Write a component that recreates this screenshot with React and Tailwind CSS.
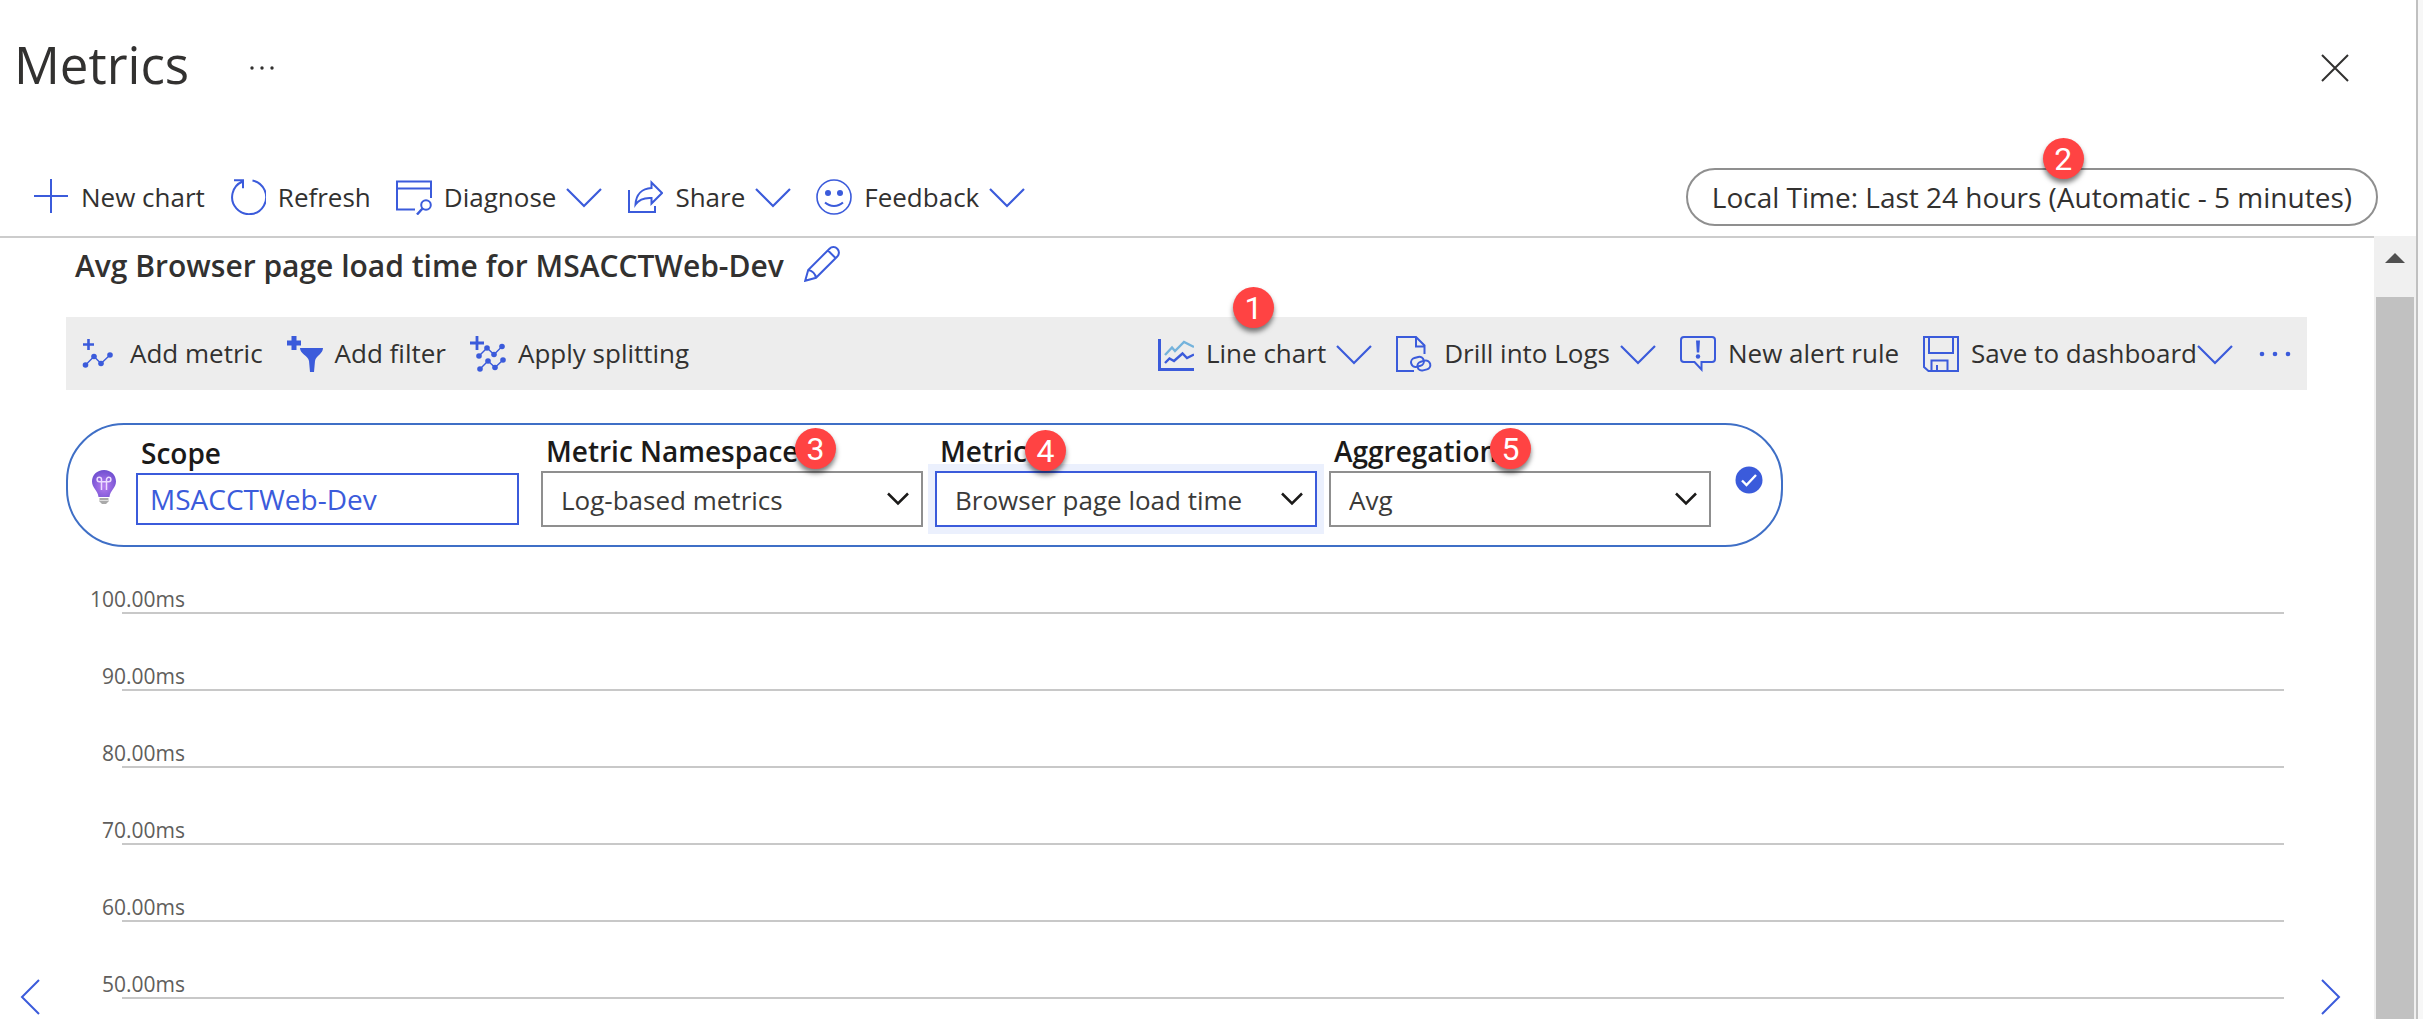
import React from "react";

const BLUE = "#3b5bdb";

function Icon({ children, size = 36, className = "" }) {
  return (
    <svg
      width={size}
      height={size}
      viewBox="0 0 36 36"
      fill="none"
      stroke={BLUE}
      strokeWidth="2"
      aria-hidden="true"
      className={"shrink-0 " + className}
    >
      {children}
    </svg>
  );
}

const Chevron = () => (
  <Icon>
    <path d="M1 10 18 27 35 10" strokeWidth="2.200" />
  </Icon>
);

const PlusIcon = () => (
  <Icon>
    <path d="M18 0v34M1 17h34" />
  </Icon>
);

const RefreshIcon = () => (
  <Icon>
    <path d="M22.500 1.500A17 17 0 1 1 12.500 2.500M4 1.200h9v8" />
  </Icon>
);

const DiagnoseIcon = () => (
  <Icon>
    <path d="M35 19V2.500H1v28h18M1 9.500h34" />
    <circle cx="30" cy="26" r="4.800" />
    <path d="M26.500 29.500 21 35.500" strokeWidth="2.500" />
  </Icon>
);

const ShareIcon = () => (
  <Icon>
    <path d="M2 11v22h26v-6" />
    <path d="M24.500 3.500 35 14 24.500 24.500V19C17 18.500 12 20.500 8.500 25.500 9 15.500 15 9.500 24.500 9Z" />
  </Icon>
);

const SmileIcon = () => (
  <Icon>
    <circle cx="18" cy="18" r="17" strokeWidth="1.600" />
    <circle cx="12" cy="14" r="3" fill={BLUE} stroke="none" />
    <circle cx="24" cy="14" r="3" fill={BLUE} stroke="none" />
    <path d="M9 23.500c5 4.500 13 4.500 18 0" />
  </Icon>
);

const PencilIcon = () => (
  <Icon>
    <path d="M1.200 34.800 4.200 24 25.500 2.700a5.400 5.400 0 0 1 7.800 7.800L12 31.800ZM4.200 24c4 .5 7.300 3.800 7.800 7.800M24 4.500l7.500 7.500" />
  </Icon>
);

const AddMetricIcon = () => (
  <Icon>
    <path d="M6.500 3v11M1 8.500h11" strokeWidth="2.600" />
    <path d="M3.500 29 12 20.500 19 27.500 28 19" strokeWidth="1.400" />
    <g fill={BLUE} stroke="none">
      <circle cx="3.500" cy="29" r="2.800" />
      <circle cx="12" cy="20.500" r="2.800" />
      <circle cx="19" cy="27.500" r="2.800" />
      <circle cx="28" cy="19" r="2.800" />
    </g>
  </Icon>
);

const AddFilterIcon = () => (
  <Icon>
    <path d="M7 0v14M0 7h14" strokeWidth="5" />
    <path
      d="M13 12h23c0 6-7 7.500-8 13l-1 11h-4l-1-11c-1-5.500-9-7-9-13Z"
      fill={BLUE}
      stroke="none"
    />
  </Icon>
);

const SplitIcon = () => (
  <Icon>
    <path d="M7 0v14M0 7h14" strokeWidth="2.800" />
    <path d="M9 20 17 12 24 18.500 32 10.500M10 33 18 25 25 31.500 33 24" strokeWidth="1.400" />
    <g fill={BLUE} stroke="none">
      <circle cx="9" cy="20" r="2.800" />
      <circle cx="17" cy="12" r="2.800" />
      <circle cx="24" cy="18.500" r="2.800" />
      <circle cx="32" cy="10.500" r="2.800" />
      <circle cx="10" cy="33" r="2.800" />
      <circle cx="18" cy="25" r="2.800" />
      <circle cx="25" cy="31.500" r="2.800" />
      <circle cx="33" cy="24" r="2.800" />
    </g>
  </Icon>
);

const LineChartIcon = () => (
  <Icon>
    <path d="M1.500 3v30.500H36" strokeWidth="3" />
    <path d="M7 19 14 11.500 17 15 26 6 36 11" stroke="#74b3dc" strokeWidth="2.400" />
    <path d="M7 27 11.500 22.500 16 25 24.500 17.500 29 22 36 18.500" strokeWidth="2.400" />
  </Icon>
);

const DrillIcon = () => (
  <Icon>
    <path d="M18 35H1V1h19l8.500 8.500V18M20 1v9.500h8.500" />
    <rect x="15" y="21.500" width="13" height="9" rx="4.500" transform="rotate(-15 21 26)" />
    <rect x="21.500" y="25" width="13" height="9" rx="4.500" transform="rotate(-15 28 30)" />
  </Icon>
);

const AlertIcon = () => (
  <Icon>
    <path d="M4 1h28q3 0 3 3v19q0 3-3 3h-10.500v7.500L14.500 26H4q-3 0-3-3V4q0-3 3-3Z" />
    <path d="M16 4.500h4l-.8 12h-2.400Z" fill={BLUE} stroke="none" />
    <circle cx="18" cy="20.500" r="2.200" fill={BLUE} stroke="none" />
  </Icon>
);

const SaveIcon = () => (
  <Icon>
    <path d="M1 1h34v34H5.500L1 31ZM6 1v16h24V1M8.500 35V24.500h16V35M14 35v-6" />
  </Icon>
);

const BulbIcon = () => (
  <svg width="24" height="34" viewBox="0 0 24 34" fill="none" aria-hidden="true" className="shrink-0">
    <defs>
      <radialGradient id="bulb" cx="50%" cy="60%" r="60%">
        <stop offset="0" stopColor="#b77cf0" />
        <stop offset="1" stopColor="#6f4fd0" />
      </radialGradient>
    </defs>
    <path
      d="M12 0C5 0 0 5 0 11.500 0 18 6 20.500 6.500 27h11C18 20.500 24 18 24 11.500 24 5 19 0 12 0Z"
      fill="url(#bulb)"
    />
    <path d="M7.500 28h9v3.500L14 34h-4l-2.500-2.500Z" fill="#a9a9a9" />
    <path d="M7.500 30.500h9" stroke="#dddddd" />
    <path
      d="M9.500 20V9.500a2.200 2.200 0 1 0-2.200 2.200h9.400a2.200 2.200 0 1 0-2.200-2.200V20"
      stroke="#ecdcff"
      strokeWidth="1.500"
    />
  </svg>
);

function ToolButton({ icon, label, chevron, tight, children }) {
  return (
    <button type="button" className="relative flex items-center gap-3 whitespace-nowrap">
      {icon}
      <span className="flex items-center">
        {label}
        {chevron && (
          <span className={tight ? "" : "ml-[10px]"}>
            <Chevron />
          </span>
        )}
      </span>
      {children}
    </button>
  );
}

function Badge({ n, className }) {
  return (
    <span
      className={
        "absolute z-10 flex size-[41px] items-center justify-center rounded-full bg-[#ff4343] font-['Roboto',sans-serif] text-[32px] leading-none font-normal text-white shadow-[0_4px_5px_rgba(0,0,0,0.5)] " +
        className
      }
    >
      {n}
    </span>
  );
}

function MetricSelect({ id, label, value, focused, badge, badgeClass }) {
  return (
    <div className="relative w-[382px]">
      <label htmlFor={id} className="block h-9 pl-[5px] text-[28px] leading-8 font-semibold text-[#1b1a19]">
        {label}
      </label>
      <div className="relative">
        <select
          id={id}
          defaultValue={value}
          className={
            "h-14 w-full appearance-none border-2 bg-white pt-[2px] pl-[18px] text-[26px] text-[#3b3a39] outline-none " +
            (focused ? "border-[#3b5bdb] ring-[7px] ring-[#ebf0fd]" : "border-[#8f8f8f]")
          }
        >
          <option>{value}</option>
        </select>
        <svg
          width="22"
          height="14"
          viewBox="0 0 22 14"
          fill="none"
          stroke="#1b1a19"
          strokeWidth="2.500"
          aria-hidden="true"
          className="pointer-events-none absolute top-[21px] right-[14px]"
        >
          <path d="M1 1.500 11 11.500 21 1.500" />
        </svg>
      </div>
      <Badge n={badge} className={badgeClass} />
    </div>
  );
}

const ticks = ["100.00ms", "90.00ms", "80.00ms", "70.00ms", "60.00ms", "50.00ms"];

export default function App() {
  return (
    <div className="flex h-screen overflow-hidden bg-white font-['Open_Sans',sans-serif] text-[26px] text-[#323130]">
      <div className="flex min-w-0 flex-1 flex-col">
        <header className="flex h-32 shrink-0 items-center pl-[14px] pr-[67px]">
          <h1 className="text-[51px] leading-none font-normal">Metrics</h1>
          <button type="button" aria-label="More options" className="mt-2 ml-[59px]">
            <svg width="28" height="6" viewBox="0 0 28 6" fill="#323130" aria-hidden="true">
              <circle cx="4" cy="3" r="1.700" />
              <circle cx="14" cy="3" r="1.700" />
              <circle cx="24" cy="3" r="1.700" />
            </svg>
          </button>
          <button type="button" aria-label="Close" className="mt-2 ml-auto">
            <svg width="28" height="28" viewBox="0 0 28 28" stroke="#323130" strokeWidth="2" aria-hidden="true">
              <path d="M1 1 27 27M27 1 1 27" />
            </svg>
          </button>
        </header>

        <div className="flex shrink-0 items-center gap-[25px] pt-10 pb-[10px] pl-[33px] pr-[38px]">
          <ToolButton icon={<PlusIcon />} label="New chart" />
          <ToolButton icon={<RefreshIcon />} label="Refresh" />
          <ToolButton icon={<DiagnoseIcon />} label="Diagnose" chevron />
          <ToolButton icon={<ShareIcon />} label="Share" chevron />
          <ToolButton icon={<SmileIcon />} label="Feedback" chevron />
          <button
            type="button"
            className="relative ml-auto h-[58px] rounded-full border-2 border-[#8f8f8f] px-6 text-[28px] whitespace-nowrap"
          >
            Local Time: Last 24 hours (Automatic - 5 minutes)
            <Badge n="2" className="-top-8 left-[355px]" />
          </button>
        </div>

        <div className="flex min-h-0 flex-1">
          <main className="min-w-0 flex-1 overflow-hidden border-t-2 border-[#cccccc]">
            <div className="pr-[67px] pl-[66px]">
              <div className="mb-6 flex h-[55px] items-center gap-5 pl-[9px]">
                <h2 className="text-[30px] font-semibold whitespace-nowrap">
                  Avg Browser page load time for MSACCTWeb-Dev
                </h2>
                <button type="button" aria-label="Rename chart" className="mb-1">
                  <PencilIcon />
                </button>
              </div>

              <div className="mb-[33px] flex h-[73px] items-center gap-6 bg-[#ededed] pr-[14px] pl-4">
                <ToolButton icon={<AddMetricIcon />} label="Add metric" />
                <ToolButton icon={<AddFilterIcon />} label="Add filter" />
                <ToolButton icon={<SplitIcon />} label="Apply splitting" />
                <div className="ml-auto flex items-center gap-6">
                  <ToolButton icon={<LineChartIcon />} label="Line chart" chevron>
                    <Badge n="1" className="-top-[47px] left-[75px]" />
                  </ToolButton>
                  <ToolButton icon={<DrillIcon />} label="Drill into Logs" chevron />
                  <ToolButton icon={<AlertIcon />} label="New alert rule" />
                  <ToolButton icon={<SaveIcon />} label="Save to dashboard" chevron tight />
                  <button type="button" aria-label="More chart options">
                    <svg width="36" height="8" viewBox="0 0 36 8" fill={BLUE} aria-hidden="true">
                      <circle cx="5" cy="4" r="2.300" />
                      <circle cx="18" cy="4" r="2.300" />
                      <circle cx="31" cy="4" r="2.300" />
                    </svg>
                  </button>
                </div>
              </div>

              <div className="flex h-[124px] w-fit items-start rounded-[58px] border-2 border-[#3f6fc6] pt-[10px] pr-[18px] pl-6">
                <div className="mt-[35px] mr-5">
                  <BulbIcon />
                </div>
                <div className="mr-[22px] w-[383px]">
                  <label
                    htmlFor="scope"
                    className="block h-[38px] pl-[5px] text-[28px] leading-9 font-semibold text-[#1b1a19]"
                  >
                    Scope
                  </label>
                  <input
                    id="scope"
                    defaultValue="MSACCTWeb-Dev"
                    className="h-[52px] w-full border-2 border-[#3b5bdb] bg-white px-3 text-[28px] text-[#3b5bdb] outline-none"
                  />
                </div>
                <div className="flex gap-3">
                  <MetricSelect
                    id="namespace"
                    label="Metric Namespace"
                    value="Log-based metrics"
                    badge="3"
                    badgeClass="-top-[7px] left-[254px]"
                  />
                  <MetricSelect
                    id="metric"
                    label="Metric"
                    value="Browser page load time"
                    focused
                    badge="4"
                    badgeClass="-top-[5px] left-[90px]"
                  />
                  <MetricSelect
                    id="aggregation"
                    label="Aggregation"
                    value="Avg"
                    badge="5"
                    badgeClass="-top-[7px] left-[161px]"
                  />
                </div>
                <svg width="28" height="28" viewBox="0 0 28 28" aria-label="Applied" className="mt-[31px] ml-6">
                  <circle cx="14" cy="14" r="13.500" fill={BLUE} />
                  <path d="M7 14.500 11.500 19 21 9" fill="none" stroke="#fff" strokeWidth="2.400" />
                </svg>
              </div>
            </div>

            <div className="flex items-end pt-10 pr-[33px] pl-[20px]">
              <button type="button" aria-label="Previous chart" className="translate-y-4">
                <svg width="20" height="36" viewBox="0 0 20 36" fill="none" stroke={BLUE} strokeWidth="2" aria-hidden="true">
                  <path d="M19 1 2 18 19 35" />
                </svg>
              </button>
              <ul className="ml-[49px] flex-1 text-[21px] text-[#605e5c]">
                {ticks.map((t, i) => (
                  <li key={t} className={i === 0 ? "" : "pt-[50px]"}>
                    <div className="flex h-[25px] w-24 items-center justify-end leading-none">{t}</div>
                    <div className="ml-[33px] h-[2px] bg-[#c8c8c8]" />
                  </li>
                ))}
              </ul>
              <button type="button" aria-label="Next chart" className="ml-[37px] translate-y-4">
                <svg width="20" height="36" viewBox="0 0 20 36" fill="none" stroke={BLUE} strokeWidth="2" aria-hidden="true">
                  <path d="M1 1 18 18 1 35" />
                </svg>
              </button>
            </div>
          </main>

          <div className="flex w-[42px] shrink-0 flex-col items-center bg-[#f0f0f0]">
            <svg width="20" height="61" viewBox="0 0 20 61" aria-hidden="true">
              <path d="M0 27 10 17 20 27Z" fill="#505050" />
            </svg>
            <div className="w-[38px] flex-1 bg-[#c1c1c1]" />
          </div>
        </div>
      </div>
      <div className="w-[7px] shrink-0 border-l-2 border-[#c0c0c0] bg-[#f7f7f7]" />
    </div>
  );
}
